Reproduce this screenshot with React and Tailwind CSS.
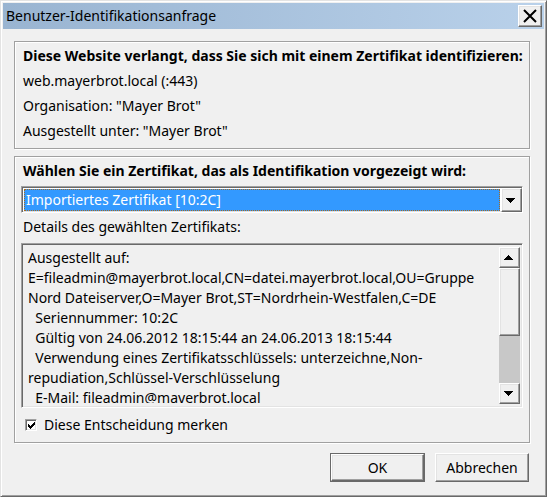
import React from "react";

const raised =
  "border border-t-white border-l-white border-r-[#696969] border-b-[#696969] bg-[#f0f0f0] shadow-[inset_-1px_-1px_0_#a0a0a0,inset_1px_1px_0_#e3e3e3]";
const group =
  "border border-[#a0a0a0] shadow-[inset_1px_1px_0_#fff,1px_1px_0_#fff]";
const sunken =
  "border border-t-[#a0a0a0] border-l-[#a0a0a0] border-r-white border-b-white shadow-[inset_1px_1px_0_#696969,inset_-1px_-1px_0_#e3e3e3]";

const details = [
  "Ausgestellt auf:",
  "E=fileadmin@mayerbrot.local,CN=datei.mayerbrot.local,OU=Gruppe",
  "Nord Dateiserver,O=Mayer Brot,ST=Nordrhein-Westfalen,C=DE",
  "  Seriennummer: 10:2C",
  "  Gültig von 24.06.2012 18:15:44 an 24.06.2013 18:15:44",
  "  Verwendung eines Zertifikatsschlüssels: unterzeichne,Non-",
  "repudiation,Schlüssel-Verschlüsselung",
  "  E-Mail: fileadmin@mayerbrot.local",
].join("\n");

function Arrow({ up = false }) {
  return (
    <svg width="9" height="5" viewBox="0 0 9 5" shapeRendering="crispEdges" aria-hidden="true">
      <path d={up ? "M4 0h1v1h1v1h1v1h1v1h1v1H0V4h1V3h1V2h1V1h1z" : "M0 0h9v1H8v1H7v1H6v1H5v1H4V4H3V3H2V2H1V1H0z"} />
    </svg>
  );
}

export default function App() {
  return (
    <main className="flex min-h-screen flex-col border border-t-[#e3e3e3] border-l-[#e3e3e3] border-r-[#696969] border-b-[#696969] bg-[#f0f0f0] p-[2px] font-['Noto_Sans','Open_Sans',sans-serif] text-[14px] leading-5 text-black shadow-[inset_1px_1px_0_#fff,inset_-1px_-1px_0_#a0a0a0]">
      <header className="flex h-[26px] items-center justify-between bg-linear-to-r from-[#99b4d1] to-[#b9d1ea] pr-[2px] pl-[3px]">
        <h1>Benutzer-Identifikationsanfrage</h1>
        <button type="button" aria-label="Schließen" className={`flex h-[22px] w-6 items-center justify-center ${raised}`}>
          <svg width="14" height="14" viewBox="0 0 14 14" fill="none" stroke="#000" strokeWidth="2" aria-hidden="true">
            <path d="M1 1l12 12M13 1L1 13" />
          </svg>
        </button>
      </header>

      <div className="flex flex-col gap-[7px] pt-3 pr-[14px] pl-[11px]">
        <section className={`flex h-[108px] flex-col gap-[5px] pt-1 pl-2 ${group}`}>
          <h2 className="font-bold whitespace-nowrap">
            Diese Website verlangt, dass Sie sich mit einem Zertifikat identifizieren:
          </h2>
          <p>web.mayerbrot.local (:443)</p>
          <p>Organisation: "Mayer Brot"</p>
          <p>Ausgestellt unter: "Mayer Brot"</p>
        </section>

        <section className={`flex flex-col px-[6px] pt-1 pb-[7px] ${group}`}>
          <label htmlFor="certificate" className="pl-[2px] font-bold whitespace-nowrap">
            Wählen Sie ein Zertifikat, das als Identifikation vorgezeigt wird:
          </label>
          <div className={`mt-[5px] flex h-[27px] bg-white pt-px pl-px ${sunken}`}>
            <select
              id="certificate"
              className="m-px min-w-0 grow appearance-none bg-[#3399ff] pl-[2px] text-white outline-1 -outline-offset-1 outline-dotted outline-[#a66a20]"
            >
              <option>Importiertes Zertifikat [10:2C]</option>
            </select>
            <span className={`pointer-events-none flex w-[21px] shrink-0 items-center justify-center pr-[2px] ${raised}`}>
              <Arrow />
            </span>
          </div>
          <label htmlFor="details" className="mt-1 pl-[2px]">
            Details des gewählten Zertifikats:
          </label>
          <div className={`mt-[6px] flex h-[165px] pt-[3px] pr-[2px] pb-[3px] pl-px ${sunken}`}>
            <textarea
              id="details"
              readOnly
              wrap="off"
              defaultValue={details}
              className="mb-px min-w-0 grow resize-none overflow-hidden bg-transparent pt-px pl-[5px] outline-none"
            />
            <div className="flex w-[21px] shrink-0 flex-col bg-[#c8c8c8]">
              <button type="button" aria-label="Nach oben" className={`flex h-[21px] items-center justify-center pr-[2px] ${raised}`}>
                <Arrow up />
              </button>
              <div className={`h-[68px] ${raised}`} />
              <button type="button" aria-label="Nach unten" className={`mt-auto flex h-[21px] items-center justify-center pr-[2px] ${raised}`}>
                <Arrow />
              </button>
            </div>
          </div>
          <label className="mt-[7px] flex items-center gap-[7px] pl-1">
            <span className="grid">
              <input
                type="checkbox"
                defaultChecked
                className={`peer col-start-1 row-start-1 size-3 appearance-none bg-white ${sunken}`}
              />
              <svg className="pointer-events-none invisible col-start-1 row-start-1 self-center justify-self-center peer-checked:visible" width="7" height="7" viewBox="0 0 7 7" shapeRendering="crispEdges" aria-hidden="true">
                <path d="M0 2h1v1h1v1h1V3h1V2h1V1h1V0h1v3H6v1H5v1H4v1H3v1H2V6H1V5H0z" />
              </svg>
            </span>
            Diese Entscheidung merken
          </label>
        </section>
      </div>

      <footer className="flex justify-end gap-[10px] pt-[10px] pr-[15px]">
        <div className="bg-[#696969] p-px">
          <button type="button" className={`h-[27px] w-[93px] ${raised}`}>OK</button>
        </div>
        <button type="button" className={`h-[29px] w-[94px] ${raised}`}>Abbrechen</button>
      </footer>
    </main>
  );
}
